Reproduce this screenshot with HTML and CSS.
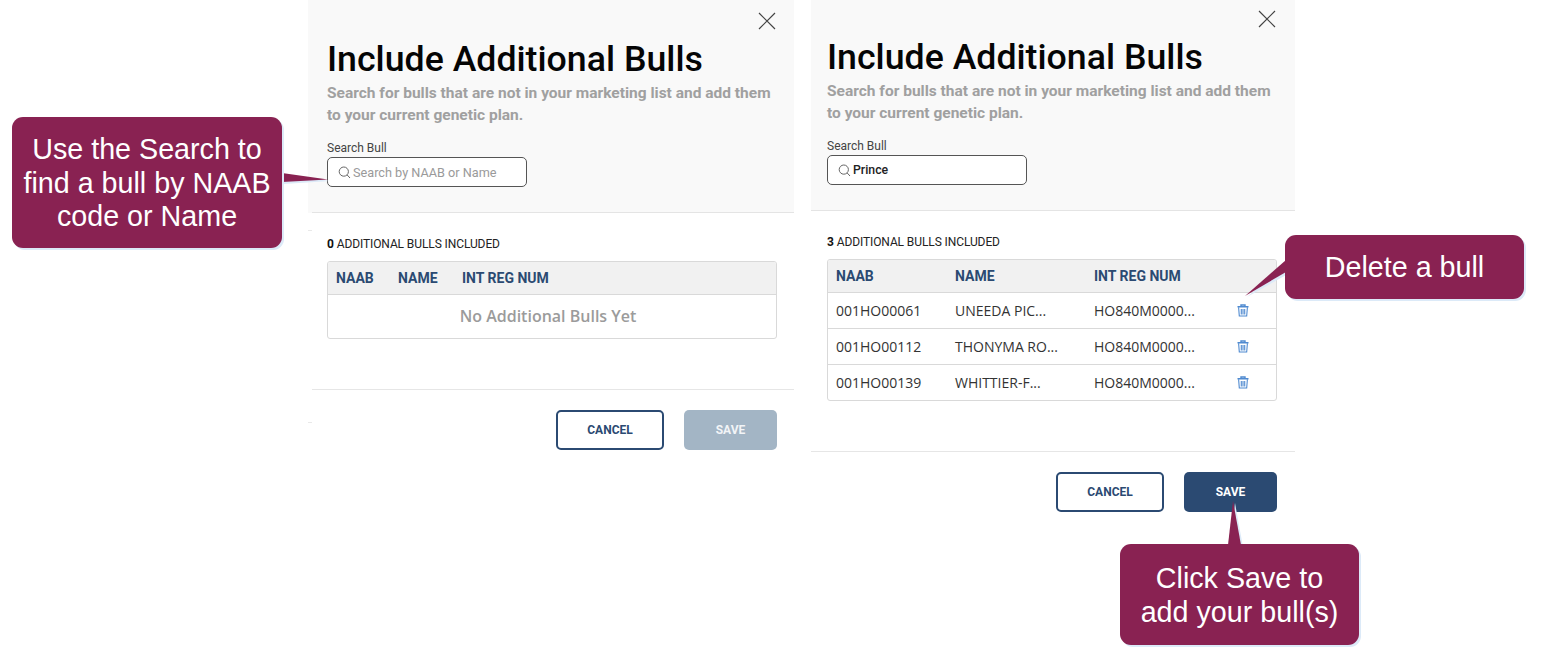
FILE: index.html
```html
<!DOCTYPE html>
<html lang="en">
<head>
<meta charset="utf-8">
<title>Include Additional Bulls</title>
<link rel="stylesheet" href="styles.css">
</head>
<body>
<main class="board">
  <section class="panel panel-empty">
    <header class="panel-head">
      <svg class="close" viewBox="0 0 18 18" width="18" height="18" aria-label="Close"><path d="M1 1 17 17M17 1 1 17"/></svg>
      <h1 class="title">Include Additional Bulls</h1>
      <p class="lead">Search for bulls that are not in your marketing list and add them to your current genetic plan.</p>
      <label class="field-label">Search Bull</label>
      <div class="search">
        <svg class="search-icon" viewBox="0 0 13 13" width="13" height="13"><circle cx="5.8" cy="5.6" r="4.6"/><path d="M9.2 9 12 12"/></svg>
        <span class="placeholder">Search by NAAB or Name</span>
      </div>
    </header>
    <div class="panel-body">
      <p class="count"><b>0</b> ADDITIONAL BULLS INCLUDED</p>
      <div class="table">
        <div class="row row-head cols-empty"><span>NAAB</span><span>NAME</span><span>INT REG NUM</span></div>
        <div class="empty-note">No Additional Bulls Yet</div>
      </div>
    </div>
    <footer class="panel-foot">
      <button class="btn btn-outline">CANCEL</button>
      <button class="btn btn-disabled">SAVE</button>
    </footer>
  </section>

  <section class="panel panel-filled">
    <header class="panel-head">
      <svg class="close" viewBox="0 0 18 18" width="18" height="18" aria-label="Close"><path d="M1 1 17 17M17 1 1 17"/></svg>
      <h1 class="title">Include Additional Bulls</h1>
      <p class="lead">Search for bulls that are not in your marketing list and add them to your current genetic plan.</p>
      <label class="field-label">Search Bull</label>
      <div class="search">
        <svg class="search-icon" viewBox="0 0 13 13" width="13" height="13"><circle cx="5.8" cy="5.6" r="4.6"/><path d="M9.2 9 12 12"/></svg>
        <span class="value">Prince</span>
      </div>
    </header>
    <div class="panel-body">
      <p class="count"><b>3</b> ADDITIONAL BULLS INCLUDED</p>
      <div class="table">
        <div class="row row-head cols-filled"><span>NAAB</span><span>NAME</span><span>INT REG NUM</span><span></span></div>
        <div class="row row-data cols-filled"><span>001HO00061</span><span>UNEEDA PIC...</span><span>HO840M0000...</span>
          <svg class="trash" viewBox="0 0 12 13" width="12" height="13"><path class="trash-lid" d="M.5 2.8h11M4 2.6V1h4v1.6"/><path d="M1.6 3.2 2.3 12h7.4l.7-8.8M4.3 5v5.4M6 5v5.4M7.7 5v5.4"/></svg></div>
        <div class="row row-data cols-filled"><span>001HO00112</span><span>THONYMA RO...</span><span>HO840M0000...</span>
          <svg class="trash" viewBox="0 0 12 13" width="12" height="13"><path class="trash-lid" d="M.5 2.8h11M4 2.6V1h4v1.6"/><path d="M1.6 3.2 2.3 12h7.4l.7-8.8M4.3 5v5.4M6 5v5.4M7.7 5v5.4"/></svg></div>
        <div class="row row-data cols-filled"><span>001HO00139</span><span>WHITTIER-F...</span><span>HO840M0000...</span>
          <svg class="trash" viewBox="0 0 12 13" width="12" height="13"><path class="trash-lid" d="M.5 2.8h11M4 2.6V1h4v1.6"/><path d="M1.6 3.2 2.3 12h7.4l.7-8.8M4.3 5v5.4M6 5v5.4M7.7 5v5.4"/></svg></div>
      </div>
    </div>
    <footer class="panel-foot">
      <button class="btn btn-outline">CANCEL</button>
      <button class="btn btn-primary">SAVE</button>
    </footer>
  </section>

  <svg class="tails" viewBox="0 0 1541 662" width="1541" height="662" aria-hidden="true">
    <path class="tail-shadow" d="M1288 262 1247 297 1288 274Z"/>
    <path class="tail-shadow" d="M284 175 330 181 284 184Z"/>
    <path class="tail-shadow" d="M1235 503 1230 547H1243Z"/>
    <path d="M282 173 328 179.5 282 182Z"/>
    <path d="M1286 260 1245 296 1286 272Z"/>
    <path d="M1233 501 1228 545H1241Z"/>
  </svg>
  <div class="callout callout-search">Use the Search to find a bull by NAAB code or Name</div>
  <div class="callout callout-delete">Delete a bull</div>
  <div class="callout callout-save"><span>Click Save to<br>add your bull(s)</span></div>
</main>
</body>
</html>
```
FILE: styles.css
```css
* { box-sizing: border-box; }
html, body { margin: 0; padding: 0; background: #fff; }
.board {
  position: relative;
  width: 1541px;
  height: 662px;
  overflow: hidden;
  font-family: "Roboto", "Liberation Sans", sans-serif;
}

/* Panels are screenshots pasted on a free slide canvas */
.panel { position: absolute; top: 0; display: flex; flex-direction: column; }
.panel-empty { left: 308px; width: 486px; }
.panel-filled { left: 811px; width: 484px; }

/* Cropping leftovers at the pasted screenshot's left edge */
.panel-empty::before,
.panel-empty::after {
  content: "";
  position: absolute;
  left: 0;
  width: 4px;
  height: 1px;
  background: #e9e9e9;
}
.panel-empty::before { top: 230px; }
.panel-empty::after { top: 422px; }

.panel-head {
  position: relative;
  background: #f9f9f9;
  padding-left: 19px;
}
.panel-head::after {
  content: "";
  position: absolute;
  left: 0;
  right: 0;
  bottom: 0;
  height: 1px;
  background: #e4e4e4;
}
.panel-empty .panel-head { height: 213px; padding-top: 37px; }
.panel-empty .panel-head::after { left: 4px; }
.panel-filled .panel-head { height: 211px; padding-top: 35px; padding-left: 16px; }

.close { position: absolute; top: 12px; right: 18px; }
.panel-filled .close { top: 10px; right: 19px; }
.close path { fill: none; stroke: #444; stroke-width: 1.2; }

.title {
  margin: 0;
  font-size: 35.7px;
  line-height: 44px;
  font-weight: 500;
  color: #050505;
  white-space: nowrap;
}
.lead {
  margin: 1px 0 0;
  width: 450px;
  font-size: 15.5px;
  line-height: 22px;
  font-weight: 700;
  color: #a0a0a0;
}
.field-label {
  display: block;
  margin-top: 15px;
  font-size: 12px;
  line-height: 14px;
  color: #444;
}
.search {
  display: flex;
  align-items: center;
  gap: 2px;
  width: 200px;
  height: 30px;
  margin-top: 2px;
  padding-left: 10px;
  background: #fff;
  border: 1px solid #555;
  border-radius: 5px;
}
.search-icon circle, .search-icon path { fill: none; stroke: #666; stroke-width: 1; }
.placeholder { color: #9a9a9a; font-size: 12.7px; }
.value { color: #222; font-weight: 500; font-size: 12.3px; }

.panel-body { padding: 0 17px 0 19px; }
.panel-filled .panel-body { padding: 0 18px 0 16px; }
.panel-empty .panel-body { height: 177px; border-bottom: 1px solid #e6e6e6; margin-left: 4px; padding-left: 15px; }
.panel-filled .panel-body { height: 241px; border-bottom: 1px solid #e6e6e6; }

.count {
  margin: 0;
  padding-top: 23px;
  height: 48px;
  font-size: 12px;
  line-height: 16px;
  color: #222;
  letter-spacing: -.1px;
}
.count b { font-weight: 700; color: #111; }

.table {
  border: 1px solid #d9d9d9;
  border-radius: 3px;
  overflow: hidden;
  background: #fff;
}
.row { display: grid; align-items: center; padding-left: 8px; }
.cols-empty { grid-template-columns: 62px 64px 1fr; }
.cols-filled { grid-template-columns: 119px 139px 143px 1fr; }
.row-head {
  height: 32px;
  background: #f1f1f1;
  font-size: 14px;
  font-weight: 700;
  color: #2b4a72;
}
.row-data {
  height: 36px;
  border-top: 1px solid #d9d9d9;
  font-family: "Open Sans", "Liberation Sans", sans-serif;
  font-size: 14px;
  color: #333;
}
.empty-note {
  height: 44px;
  padding-right: 8px;
  border-top: 1px solid #d9d9d9;
  text-align: center;
  line-height: 42px;
  font-family: "Open Sans", "Liberation Sans", sans-serif;
  font-size: 16px;
  font-weight: 600;
  color: #9b9b9b;
}
.trash path { fill: none; stroke: #4f8ad0; stroke-width: 1.1; }
.trash .trash-lid { stroke-width: 1.4; }

.panel-foot {
  display: flex;
  justify-content: flex-end;
  gap: 20px;
  padding: 20px 17px 0 0;
}
.panel-filled .panel-foot { padding-right: 18px; }
.btn {
  height: 40px;
  border-radius: 5px;
  font-family: "Roboto", "Liberation Sans", sans-serif;
  font-size: 12px;
  font-weight: 700;
  padding: 0;
}
.btn-outline { width: 108px; background: #fff; border: 2px solid #2b4a72; color: #2b4a72; }
.btn-disabled { width: 93px; background: #a3b5c5; border: 0; color: #f2f4f7; }
.btn-primary { width: 93px; background: #2b4a72; border: 0; color: #fff; }

/* Callouts lie over the panels */
.tails { position: absolute; left: 0; top: 0; pointer-events: none; }
.tails path { fill: #892252; }
.tails .tail-shadow { fill: #dceaf8; }
.callout {
  position: absolute;
  display: flex;
  align-items: center;
  justify-content: center;
  text-align: center;
  padding-top: 2px;
  background: #892252;
  color: #fff;
  border-radius: 11px;
  box-shadow: 2px 2px 0 #dceaf8;
  font-family: "Liberation Sans", Arial, sans-serif;
  font-size: 28.7px;
  line-height: 33.5px;
}
.callout-search { left: 12px; top: 117px; width: 270px; height: 131px; padding-left: 6px; padding-right: 6px; }
.callout-delete { left: 1285px; top: 235px; width: 239px; height: 64px; }
.callout-save { left: 1120px; top: 544px; width: 239px; height: 101px; }
```
